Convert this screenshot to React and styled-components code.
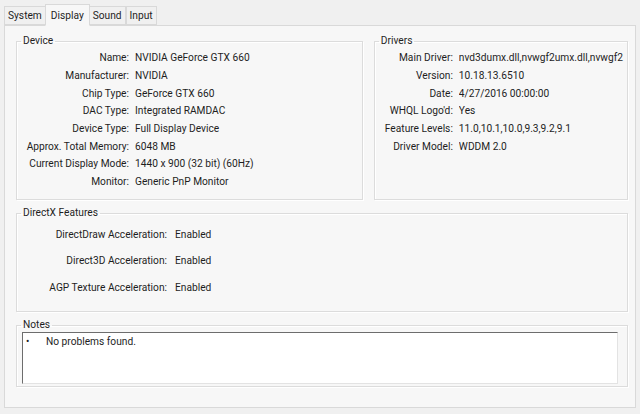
import React from 'react'
import styled, { createGlobalStyle } from 'styled-components'

const GlobalStyle = createGlobalStyle`
    html, body {
        margin: 0;
        padding: 0;
        background: #f0f0f0;
        font-family: Roboto, "Noto Sans", "DejaVu Sans", sans-serif;
        font-size: 10.2px;
        color: #1e1e1e;
    }
`

const device = [
    ['Name', 'NVIDIA GeForce GTX 660'],
    ['Manufacturer', 'NVIDIA'],
    ['Chip Type', 'GeForce GTX 660'],
    ['DAC Type', 'Integrated RAMDAC'],
    ['Device Type', 'Full Display Device'],
    ['Approx. Total Memory', '6048 MB'],
    ['Current Display Mode', '1440 x 900 (32 bit) (60Hz)'],
    ['Monitor', 'Generic PnP Monitor'],
]

const drivers = [
    ['Main Driver', 'nvd3dumx.dll,nvwgf2umx.dll,nvwgf2'],
    ['Version', '10.18.13.6510'],
    ['Date', '4/27/2016 00:00:00'],
    ['WHQL Logo\'d', 'Yes'],
    ['Feature Levels', '11.0,10.1,10.0,9.3,9.2,9.1'],
    ['Driver Model', 'WDDM 2.0'],
]

const features = [
    ['DirectDraw Acceleration', 'Enabled'],
    ['Direct3D Acceleration', 'Enabled'],
    ['AGP Texture Acceleration', 'Enabled'],
]

const tabs = ['System', 'Display', 'Sound', 'Input']

const InfoGrid = ({ rows, labelWidth, rowHeight, gap, top }) => (
    <Grid $labelWidth={labelWidth} $rowHeight={rowHeight} $gap={gap} $top={top}>
        {rows.map(([label, value]) => (
            <React.Fragment key={label}>
                <Label>{label}:</Label>
                <Value>{value}</Value>
            </React.Fragment>
        ))}
    </Grid>
)

const App = () => (
    <Window>
        <GlobalStyle />
        <TabStrip>
            {tabs.map((t) => (
                <Tab key={t} $active={t === 'Display'}>
                    {t}
                </Tab>
            ))}
        </TabStrip>
        <TabPage>
            <TopRow>
                <Group $width={348} $height={166}>
                    <Legend>Device</Legend>
                    <InfoGrid rows={device} labelWidth={112} rowHeight={17.7} gap={6} top={1} />
                </Group>
                <Group $width={255} $height={166}>
                    <Legend>Drivers</Legend>
                    <InfoGrid rows={drivers} labelWidth={78} rowHeight={17.7} gap={6} top={1} />
                </Group>
            </TopRow>
            <Group $height={106}>
                <Legend>DirectX Features</Legend>
                <InfoGrid rows={features} labelWidth={150} rowHeight={26.5} gap={8} top={1} />
            </Group>
            <Group $height={69}>
                <Legend>Notes</Legend>
                <NotesBox>
                    <Bullet>•</Bullet>
                    <span>No problems found.</span>
                </NotesBox>
            </Group>
        </TabPage>
    </Window>
)

const Window = styled.div`
    padding: 3px 4px 0 4px;
    width: 632px;
`

const TabStrip = styled.div`
    display: flex;
    align-items: flex-end;
    height: 22px;
    position: relative;
    z-index: 1;
`

const Tab = styled.div`
    box-sizing: border-box;
    height: ${({ $active }) => ($active ? '22px' : '19px')};
    padding: 0 ${({ $active }) => ($active ? '5px' : '3px')};
    margin: 0 ${({ $active }) => ($active ? '-1px' : '0')};
    display: flex;
    align-items: center;
    border: 1px solid #d9d9d9;
    border-bottom: ${({ $active }) => ($active ? '1px solid #f7f7f7' : '1px solid #d9d9d9')};
    margin-bottom: ${({ $active }) => ($active ? '-1px' : '0')};
    background: ${({ $active }) => ($active ? '#f7f7f7' : '#f0f0f0')};
    & + & {
        border-left: ${({ $active }) => ($active ? '1px solid #d9d9d9' : 'none')};
    }
`

const TabPage = styled.div`
    box-sizing: border-box;
    height: 383px;
    border: 1px solid #d9d9d9;
    background: #f7f7f7;
    padding: 8px 7px 0 11px;
    display: flex;
    flex-direction: column;
    gap: 6px;
`

const TopRow = styled.div`
    display: flex;
    gap: 11px;
`

const Group = styled.fieldset`
    box-sizing: border-box;
    margin: 0;
    padding: 0;
    width: ${({ $width }) => ($width ? `${$width}px` : 'auto')};
    height: ${({ $height }) => $height}px;
    border: 1px solid #dcdcdc;
    box-shadow: inset 1px 1px 0 #ffffff, 1px 1px 0 #ffffff;
    min-width: 0;
`

const Legend = styled.legend`
    padding: 0 2px;
    margin-left: 4px;
    line-height: 14px;
`

const Grid = styled.div`
    display: grid;
    grid-template-columns: ${({ $labelWidth }) => $labelWidth}px 1fr;
    grid-auto-rows: ${({ $rowHeight }) => $rowHeight}px;
    column-gap: ${({ $gap }) => $gap}px;
    align-items: center;
    padding-top: ${({ $top }) => $top}px;
`

const Label = styled.div`
    text-align: right;
    white-space: nowrap;
`

const Value = styled.div`
    white-space: nowrap;
    overflow: hidden;
`

const NotesBox = styled.div`
    box-sizing: border-box;
    margin: 0 9px 0 5px;
    height: 52px;
    background: #ffffff;
    border-top: 1px solid #6d6d6d;
    border-left: 1px solid #6d6d6d;
    border-right: 1px solid #e3e3e3;
    border-bottom: 1px solid #e3e3e3;
    display: flex;
    align-items: flex-start;
    padding: 2px 0 0 3px;
    line-height: 14px;
`

const Bullet = styled.span`
    width: 20px;
    font-size: 10px;
`

export default App
